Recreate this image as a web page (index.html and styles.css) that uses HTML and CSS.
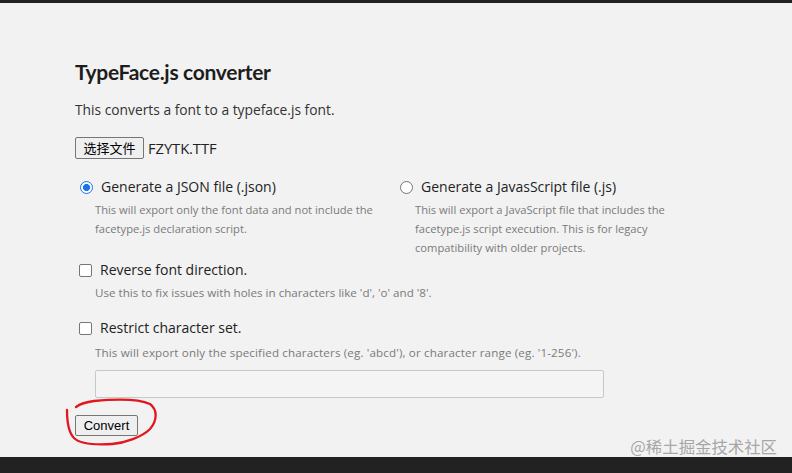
FILE: index.html
```html
<!DOCTYPE html>
<html lang="en">
<head>
<meta charset="utf-8">
<title>TypeFace.js converter</title>
<link rel="stylesheet" href="styles.css">
</head>
<body>
<div class="topbar"></div>
<main class="page">
  <h1 class="title">TypeFace.js converter</h1>
  <p class="intro">This converts a font to a typeface.js font.</p>
  <div class="file-row">
    <button class="file-btn" type="button">选择文件</button>
    <span class="file-name">FZYTK.TTF</span>
  </div>
  <div class="options">
    <div class="option">
      <label class="opt-label"><span class="radio checked"></span>Generate a JSON file (.json)</label>
      <p class="desc">This will export only the font data and not include the facetype.js declaration script.</p>
    </div>
    <div class="option">
      <label class="opt-label"><span class="radio"></span>Generate a JavasScript file (.js)</label>
      <p class="desc">This will export a JavaScript file that includes the facetype.js script execution. This is for legacy compatibility with older projects.</p>
    </div>
  </div>
  <div class="check">
    <label class="opt-label"><span class="box"></span>Reverse font direction.</label>
    <p class="desc wide">Use this to fix issues with holes in characters like 'd', 'o' and '8'.</p>
  </div>
  <div class="check">
    <label class="opt-label"><span class="box"></span>Restrict character set.</label>
    <p class="desc wide">This will export only the specified characters (eg. 'abcd'), or character range (eg. '1-256').</p>
    <div class="text-input"></div>
  </div>
  <div class="convert-wrap">
    <button class="convert" type="button">Convert</button>
    <svg class="circle" width="100" height="52" viewBox="0 0 100 52">
      <path d="M3 12 C3 23 5 35 10 40 C16 46 32 47 48 46 C61 45 78 39 86 31 C93 23 94 12 86 6 C75 1 52 1 30 3 C22 4 16 6 12 9" fill="none" stroke="#e1161f" stroke-width="2.3" stroke-linecap="round"/>
    </svg>
  </div>
  <div class="watermark">@稀土掘金技术社区</div>
</main>
<div class="bottombar"></div>
</body>
</html>
```
FILE: styles.css
```css
* { box-sizing: border-box; }
html, body { margin: 0; padding: 0; }
body {
  background: #f2f2f2;
  font-family: "Open Sans", "Noto Sans", sans-serif;
  color: #222;
  width: 792px;
  height: 473px;
  overflow: hidden;
  display: flex;
  flex-direction: column;
}
.topbar { height: 3px; background: #222; flex: none; }
.bottombar { height: 16px; background: #222; flex: none; }
.page {
  flex: 1;
  position: relative;
  padding: 55px 0 0 75px;
}
.title {
  margin: 0;
  font-family: "Lato", sans-serif;
  font-weight: 700;
  font-size: 21px;
  line-height: 28px;
  color: #1d1d1d;
  letter-spacing: -0.3px;
}
.intro {
  margin: 14px 0 0;
  font-size: 13.8px;
  line-height: 20px;
  color: #333;
}
.file-row {
  margin-top: 17px;
  display: flex;
  align-items: center;
  gap: 4px;
  height: 22px;
}
.file-btn {
  font-family: "Noto Sans CJK SC", sans-serif;
  font-size: 13px;
  height: 22px;
  width: 69px;
  padding: 0;
  background: #efefef;
  border: 1px solid #767676;
  border-radius: 2px;
  color: #000;
  line-height: 20px;
}
.file-name { font-family: "Open Sans", sans-serif; font-size: 14.8px; color: #222; letter-spacing: -0.1px; }
.options {
  margin-top: 18px;
  display: grid;
  grid-template-columns: 320px 280px;
}
.option { padding-left: 5px; }
.opt-label {
  display: flex;
  align-items: center;
  font-size: 14px;
  line-height: 20px;
  color: #222;
  gap: 8px;
}
.radio {
  width: 13px; height: 13px;
  border-radius: 50%;
  border: 1px solid #767676;
  background: #fff;
  flex: none;
}
.radio.checked {
  border: 1.5px solid #1a73e8;
  background: radial-gradient(circle, #1a73e8 0 3.3px, #fff 3.8px);
}
.desc {
  margin: 3px 0 0 15px;
  font-size: 11.2px;
  line-height: 19px;
  color: #7a7a7a;
  max-width: 300px;
}
.option:nth-child(2) .desc { max-width: 272px; }
.desc.wide { max-width: none; margin-left: 16px; font-size: 11.6px; letter-spacing: 0; }
.check { margin-top: 3px; padding-left: 4px; }
.check + .check { margin-top: 16px; }
.check + .check .desc.wide { margin-top: 5px; letter-spacing: 0.15px; }
.box {
  width: 13px; height: 13px;
  border: 1px solid #767676;
  border-radius: 2px;
  background: #fff;
  flex: none;
}
.text-input {
  margin: 8px 0 0 16px;
  width: 509px;
  height: 28px;
  border: 1px solid #c8c8c8;
  border-radius: 2px;
  background: #f4f4f4;
}
.convert-wrap {
  position: relative;
  margin-top: 15px;
  width: 63px;
}
.convert {
  font-family: "Liberation Sans", Arial, sans-serif;
  font-size: 13px;
  height: 21px;
  width: 63px;
  padding: 0;
  background: #efefef;
  border: 1px solid #767676;
  border-radius: 2px;
  color: #000;
}
.circle {
  position: absolute;
  left: -11px;
  top: -15px;
  pointer-events: none;
}
.watermark {
  position: absolute;
  right: 15px;
  bottom: 1px;
  font-family: "Noto Sans CJK SC", sans-serif;
  font-size: 16.4px;
  color: #a7a7a7;
  line-height: 20px;
}
```
